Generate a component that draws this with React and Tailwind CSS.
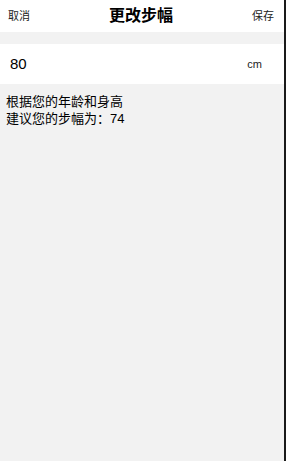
import React from 'react';

const font = { fontFamily: '"Liberation Sans", "Noto Sans CJK SC", sans-serif' };

const App = () => {
  return (
    <div className="flex h-[461px] w-[286px]" style={font}>
      <div className="flex flex-1 flex-col bg-[#f2f2f2]">
        <div className="flex h-[32px] items-center justify-between bg-white pl-[8px] pr-[10px]">
          <span className="text-[11px] text-[#222]">取消</span>
          <span className="text-[16px] font-bold text-black">更改步幅</span>
          <span className="text-[11px] text-[#222]">保存</span>
        </div>
        <div className="h-[12px]" />
        <div className="flex h-[40px] items-center justify-between bg-white pl-[10px] pr-[22px]">
          <span className="text-[15px] text-black">80</span>
          <span className="text-[11px] text-[#222]">cm</span>
        </div>
        <div className="px-[6px] pt-[9px] text-[13px] leading-[17px] text-black">
          <p>根据您的年龄和身高</p>
          <p>建议您的步幅为：74</p>
        </div>
      </div>
      <div className="w-[2px] bg-[#1a1a1a]" />
    </div>
  );
};

export default App;
